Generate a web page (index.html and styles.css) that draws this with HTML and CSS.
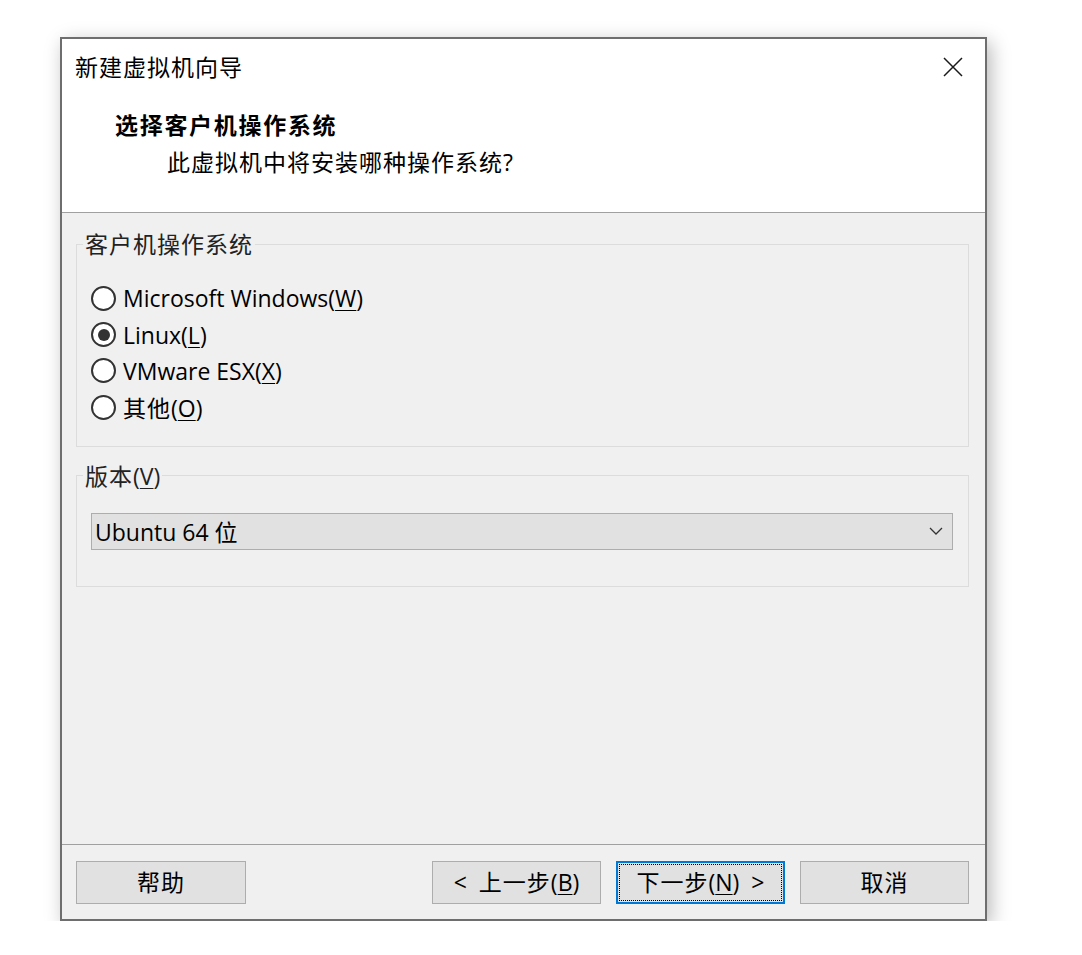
FILE: index.html
```html
<!DOCTYPE html>
<html lang="zh-CN">
<head>
<meta charset="utf-8">
<title>新建虚拟机向导</title>
<link rel="stylesheet" href="styles.css">
</head>
<body>
<div class="window">
  <header class="header">
    <div class="titlebar">
      <span class="title zh">新建虚拟机向导</span>
      <button class="close" aria-label="关闭">
        <svg width="20" height="20" viewBox="0 0 20 20"><path d="M1 1 L19 19 M19 1 L1 19" stroke="#1a1a1a" stroke-width="1.5" fill="none"/></svg>
      </button>
    </div>
    <div class="heading zh">选择客户机操作系统</div>
    <div class="subtitle zh">此虚拟机中将安装哪种操作系统?</div>
  </header>
  <main class="content">
    <fieldset class="group group-os">
      <legend class="zh">客户机操作系统</legend>
      <div class="radios">
        <label class="radio"><span class="dot"></span><span>Microsoft Windows(<u>W</u>)</span></label>
        <label class="radio checked"><span class="dot"></span><span>Linux(<u>L</u>)</span></label>
        <label class="radio"><span class="dot"></span><span>VMware ESX(<u>X</u>)</span></label>
        <label class="radio"><span class="dot"></span><span><span class="zh">其他</span>(<u>O</u>)</span></label>
      </div>
    </fieldset>
    <fieldset class="group group-ver">
      <legend><span class="zh">版本</span>(<u>V</u>)</legend>
      <div class="select">
        <span>Ubuntu 64 <span class="zh">位</span></span>
        <svg width="14" height="8" viewBox="0 0 14 8"><path d="M1 1 L7 7 L13 1" stroke="#333" stroke-width="1.3" fill="none"/></svg>
      </div>
    </fieldset>
  </main>
  <footer class="footer">
    <button class="btn"><span class="zh">帮助</span></button>
    <div class="spacer"></div>
    <button class="btn">&lt;&nbsp; <span class="zh">上一步</span>(<u>B</u>)</button>
    <button class="btn primary"><span class="zh">下一步</span>(<u>N</u>)&nbsp; &gt;</button>
    <button class="btn"><span class="zh">取消</span></button>
  </footer>
</div>
</body>
</html>
```
FILE: styles.css
```css
* { box-sizing: border-box; }
html, body { margin: 0; padding: 0; background: #fff; }
body {
  font-family: "Open Sans", "Noto Sans CJK SC", sans-serif;
  font-size: 23px;
  color: #000;
}
.zh { letter-spacing: 1px; }

.window {
  margin: 37px 0 0 60px;
  width: 927px;
  height: 884px;
  border: 2px solid #6e6e6e;
  background: #f0f0f0;
  display: flex;
  flex-direction: column;
  box-shadow: 4px 5px 18px rgba(0,0,0,0.28);
}

.header {
  height: 174px;
  background: #fff;
  border-bottom: 1px solid #a0a0a0;
  padding: 13px 22px 0 13px;
}
.titlebar {
  display: flex;
  justify-content: space-between;
  align-items: center;
  height: 30px;
  line-height: 30px;
}
.close {
  border: 0;
  background: none;
  padding: 0;
  width: 20px;
  height: 20px;
  display: block;
}
.close svg { display: block; }
.heading {
  margin-top: 28px;
  padding-left: 40px;
  line-height: 30px;
  font-weight: 700;
  letter-spacing: 1.7px;
}
.subtitle {
  margin-top: 7px;
  padding-left: 92px;
  line-height: 30px;
}

.content {
  flex: 1;
  padding: 16px 16px 0 14px;
}
.group {
  margin: 0;
  border: 1px solid #dcdcdc;
  padding: 0 0 0 6px;
}
.group legend {
  padding: 0 2px;
  line-height: 30px;
  color: #222;
}
.radios {
  padding: 21px 0 20px 8px;
}
.radio {
  display: flex;
  align-items: center;
  height: 36.4px;
  gap: 7px;
}
.dot {
  width: 25px;
  height: 25px;
  border-radius: 50%;
  border: 2px solid #333;
  background: #fff;
  display: flex;
  align-items: center;
  justify-content: center;
  flex: none;
}
.checked .dot::after {
  content: "";
  width: 12px;
  height: 12px;
  border-radius: 50%;
  background: #333;
}

.group-ver { margin-top: 14px; }
.select {
  margin: 22px 15px 36px 8px;
  height: 37px;
  background: #e1e1e1;
  border: 1px solid #adadad;
  display: flex;
  align-items: center;
  justify-content: space-between;
  padding: 0 9px 0 3px;
}

.footer {
  height: 75px;
  border-top: 1px solid #a0a0a0;
  display: flex;
  align-items: flex-start;
  gap: 15px;
  padding: 16px 16px 0 14px;
}
.spacer { flex: 1; }
.btn {
  font: inherit;
  color: #000;
  width: 169px;
  height: 43px;
  background: #e1e1e1;
  border: 1px solid #adadad;
  padding: 0;
  line-height: 1;
}
.btn:first-child { width: 170px; }
.btn.primary {
  border: 2px solid #0078d7;
  outline: 1px dotted #000;
  outline-offset: -4px;
}
u { text-decoration-thickness: 1px; text-underline-offset: 3px; }
```
